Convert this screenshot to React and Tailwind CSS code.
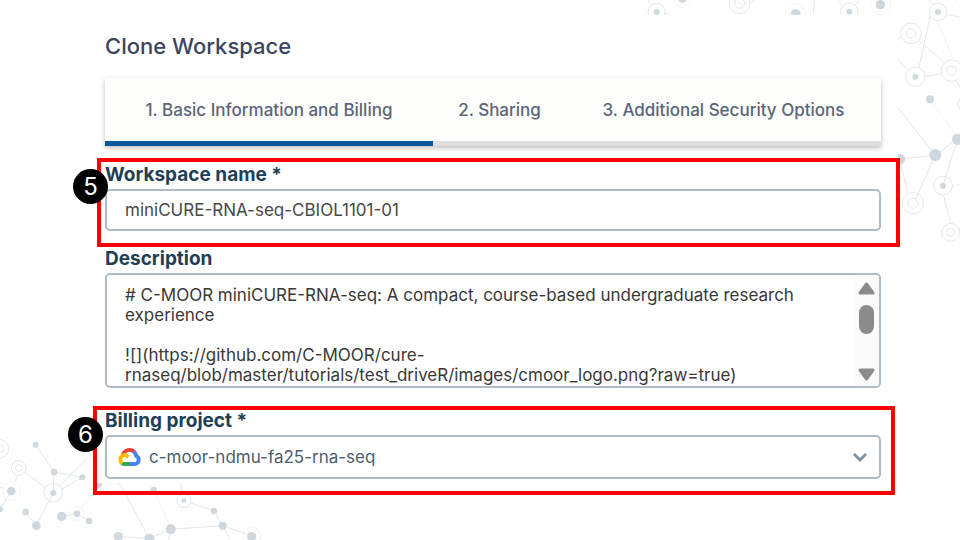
import React from 'react';

const DESCRIPTION = `# C-MOOR miniCURE-RNA-seq: A compact, course-based undergraduate research experience

![](https://github.com/C-MOOR/cure-rnaseq/blob/master/tutorials/test_driveR/images/cmoor_logo.png?raw=true)`;

function NetworkTopRight() {
  return (
    <svg aria-hidden="true" viewBox="0 0 960 750" className="pointer-events-none absolute top-0 right-0 h-[250px] w-80">
      <defs>
        <clipPath id="top-strip">
          <rect x="0" y="0" width="774" height="44" />
        </clipPath>
        <clipPath id="right-strip">
          <rect x="774" y="0" width="186" height="750" />
        </clipPath>
      </defs>
      <g fill="none" stroke="#dbe2e6" strokeWidth="2.5" clipPath="url(#top-strip)">
        <circle cx="50" cy="36" r="26" />
        <path d="M24 0l12 14M72 42h16M330 10l16-12M523 0l-3 44M608 18L592 0M646 16l10-16" />
        <circle cx="127" cy="-3" r="25" strokeDasharray="3 4" />
        <circle cx="299" cy="10" r="31" />
        <circle cx="299" cy="10" r="15" />
        <circle cx="467" cy="42" r="30" strokeDasharray="3 4" />
        <circle cx="628" cy="35" r="26" />
        <circle cx="721" cy="14" r="30" strokeDasharray="3 4" />
        <g fill="#cfd8de" stroke="none">
          <circle cx="50" cy="36" r="9" />
          <circle cx="127" cy="-4" r="12" />
          <circle cx="467" cy="42" r="15" />
          <circle cx="628" cy="35" r="9" />
          <circle cx="721" cy="14" r="14" />
        </g>
      </g>
      <g fill="none" stroke="#dbe2e6" strokeWidth="2.5" clipPath="url(#right-strip)">
        <circle cx="894" cy="36" r="26" />
        <circle cx="813" cy="100" r="31" />
        <circle cx="813" cy="100" r="14" />
        <circle cx="826" cy="230" r="29" />
        <circle cx="935" cy="212" r="32" />
        <circle cx="935" cy="212" r="14" />
        <circle cx="980" cy="312" r="26" />
        <circle cx="970" cy="-6" r="24" strokeDasharray="3 4" />
        <circle cx="909" cy="557" r="28" />
        <circle cx="819" cy="610" r="32" />
        <circle cx="819" cy="610" r="15" />
        <circle cx="932" cy="697" r="27" />
        <circle cx="932" cy="697" r="12" />
        <path d="M868 0l12 14M920 43l40 9M871 48l-34 154M774 117l10-5M836 121l78 67M774 177l30 32M855 230l49-9M949 241l11 22M774 323l112 142l66-47M782 477l104-12l-59 132M782 490l22 93M950 425l-41 132M910 585l22 84" />
        <path d="M892 64l50 118M875 305l75 105M937 557l23-4" strokeDasharray="3 4" />
        <g fill="#cfd8de" stroke="none">
          <circle cx="894" cy="36" r="9" />
          <circle cx="826" cy="230" r="9" />
          <circle cx="870" cy="298" r="12" />
          <circle cx="953" cy="418" r="17" />
          <circle cx="886" cy="465" r="18" />
          <circle cx="780" cy="477" r="16" />
          <circle cx="909" cy="557" r="9" />
        </g>
      </g>
    </svg>
  );
}

function NetworkBottomLeft() {
  return (
    <svg aria-hidden="true" viewBox="0 0 960 420" className="pointer-events-none absolute bottom-0 left-0 h-[140px] w-80">
      <g fill="none" stroke="#dbe2e6" strokeWidth="2.5">
        <circle cx="-2" cy="146" r="28" />
        <circle cx="0" cy="146" r="11" />
        <circle cx="56" cy="204" r="22" />
        <circle cx="56" cy="204" r="10" />
        <circle cx="160" cy="278" r="28" />
        <circle cx="34" cy="273" r="27" strokeDasharray="3 4" />
        <circle cx="231" cy="341" r="20" strokeDasharray="3 4" />
        <circle cx="552" cy="302" r="21" />
        <circle cx="755" cy="410" r="27" strokeDasharray="3 4" />
        <path d="M107 134l55 82l85 16l-64 37M162 216l-2 62l-51 99l-32-41M74 216l63 48M52 226l-6 20M0 262l8 2M34 273L0 328M180 257l96-98M185 349l46-8l36 22M355 410l93 5l64-27l156-11l87 30M358 250l90 165M541 250l6 30M573 309l69 24l26 44l22 43M512 388l-6 32" />
        <path d="M246 324l46-66M328 252h30M461 270l48 106" strokeDasharray="3 4" />
        <g fill="#cfd8de" stroke="none">
          <circle cx="107" cy="134" r="9" />
          <circle cx="162" cy="216" r="10" />
          <circle cx="247" cy="232" r="9" />
          <circle cx="160" cy="279" r="9" />
          <circle cx="34" cy="273" r="13" />
          <circle cx="0" cy="328" r="9" />
          <circle cx="77" cy="336" r="10" />
          <circle cx="109" cy="377" r="13" />
          <circle cx="185" cy="349" r="14" />
          <circle cx="231" cy="341" r="10" />
          <circle cx="267" cy="363" r="10" />
          <path d="M290 250h17q-3 17-17 17z" />
          <circle cx="461" cy="270" r="10" />
          <circle cx="552" cy="301" r="7" />
          <circle cx="642" cy="333" r="10" />
          <circle cx="668" cy="377" r="12" />
          <circle cx="512" cy="388" r="15" />
          <circle cx="448" cy="416" r="15" />
          <circle cx="355" cy="410" r="14" />
          <circle cx="755" cy="410" r="14" />
        </g>
      </g>
    </svg>
  );
}

function CloudLogo() {
  return (
    <svg aria-hidden="true" viewBox="0 0 256 206" className="h-[18px] w-[23px] shrink-0">
      <path fill="#EA4335" d="M170.252 56.819l22.253-22.253 1.483-9.37C153.437-11.677 88.976-7.496 52.42 33.92 42.267 45.423 34.734 59.764 30.717 74.573l7.97-1.123 44.505-7.34 3.436-3.513c19.797-21.742 53.27-24.667 76.128-6.168l7.496.39z" />
      <path fill="#4285F4" d="M224.205 73.918a100.249 100.249 0 0 0-30.217-48.722l-31.232 31.232a55.515 55.515 0 0 1 20.379 44.037v5.544c15.35 0 27.797 12.445 27.797 27.796 0 15.352-12.446 27.485-27.797 27.485h-55.671l-5.466 5.934v33.34l5.466 5.231h55.67c39.93.311 72.553-31.494 72.864-71.424a72.303 72.303 0 0 0-31.793-60.453" />
      <path fill="#34A853" d="M71.87 205.796h55.593V161.29H71.87a27.275 27.275 0 0 1-11.477-2.498l-7.887 2.42-22.408 22.253-1.952 7.574a71.988 71.988 0 0 0 43.724 14.757" />
      <path fill="#FBBC05" d="M71.87 61.426C31.94 61.663-.237 94.228.001 134.158a72.301 72.301 0 0 0 28.145 56.88l32.247-32.246c-13.99-6.322-20.208-22.786-13.887-36.776 6.32-13.99 22.786-20.208 36.775-13.888a27.796 27.796 0 0 1 13.887 13.888l32.248-32.248A72.224 72.224 0 0 0 71.87 61.426" />
    </svg>
  );
}

function Scrollbar() {
  return (
    <div aria-hidden="true" className="flex w-[26px] shrink-0 flex-col items-center bg-[#fbfbfb] pt-[7px] pb-[5px]">
      <svg viewBox="0 0 17 13" className="h-[13px] w-[17px]">
        <path d="M8.5 2L15 11H2z" fill="#8b8b8b" stroke="#8b8b8b" strokeWidth="3" strokeLinejoin="round" />
      </svg>
      <div className="mt-[10px] h-[29px] w-[15px] rounded-full bg-[#8b8b8b]" />
      <svg viewBox="0 0 17 13" className="mt-auto h-[13px] w-[17px]">
        <path d="M8.5 11L15 2H2z" fill="#8b8b8b" stroke="#8b8b8b" strokeWidth="3" strokeLinejoin="round" />
      </svg>
    </div>
  );
}

export default function App() {
  return (
    <div className="relative min-h-screen overflow-hidden bg-white font-['Inter',sans-serif]">
      <NetworkTopRight />
      <NetworkBottomLeft />
      <main className="relative pt-8 pr-[79px] pl-[105px]">
        <h1 className="text-[22px] leading-7 font-medium text-[#3b4560]">Clone Workspace</h1>

        <nav className="mt-[18px] grid grid-cols-[328fr_133fr_315fr] bg-[#fdfdfb] text-[17px] font-medium whitespace-nowrap text-[#5b6578] shadow-[0_2px_5px_rgba(0,0,0,0.25)]">
          <button type="button" className="h-[68px] border-b-5 border-[#065a9b] pt-[2px]">1. Basic Information and Billing</button>
          <button type="button" className="h-[68px] border-b-5 border-[#dfdfdf] pt-[2px]">2. Sharing</button>
          <button type="button" className="h-[68px] border-b-5 border-[#dfdfdf] pt-[2px]">3. Additional Security Options</button>
        </nav>

        <section className="relative mt-4">
          <label htmlFor="workspace-name" className="block text-[19px] leading-[26px] font-bold text-[#1f3f57]">Workspace name *</label>
          <input
            id="workspace-name"
            type="text"
            defaultValue="miniCURE-RNA-seq-CBIOL1101-01"
            className="mt-px block h-[42px] w-full rounded-[5px] border-2 border-[#afbcc6] bg-white px-[18px] text-[17px] text-[#484848]"
          />
          <div className="pointer-events-none absolute -top-1 -right-[19px] -bottom-4 -left-2 border-4 border-[#fe0000]" />
          <span className="absolute top-[7px] -left-8 flex size-[35px] items-center justify-center rounded-full bg-black text-2xl text-white">5</span>
        </section>

        <section className="mt-[15px]">
          <label htmlFor="description" className="block text-[19px] leading-[26px] font-bold text-[#1f3f57]">Description</label>
          <div className="mt-px flex h-[115px] overflow-hidden rounded-[5px] border-2 border-[#afbcc6] bg-white">
            <textarea
              id="description"
              defaultValue={DESCRIPTION}
              className="min-w-0 flex-1 resize-none overflow-hidden pt-[10px] pr-2 pl-[18px] text-[17px] leading-5 text-[#383838]"
            />
            <Scrollbar />
          </div>
        </section>

        <section className="relative mt-5">
          <label htmlFor="billing-project" className="block text-[19px] leading-[26px] font-bold text-[#1f3f57]">Billing project *</label>
          <div className="mt-px flex h-11 items-center rounded-[5px] border-2 border-[#afbcc6] bg-white px-[11px]">
            <CloudLogo />
            <select id="billing-project" className="min-w-0 flex-1 appearance-none bg-transparent pt-[2px] pl-2 text-[17px] text-[#4d5d6b]">
              <option>c-moor-ndmu-fa25-rna-seq</option>
            </select>
            <svg aria-hidden="true" viewBox="0 0 16 10" className="h-[10px] w-4 shrink-0">
              <path d="M2 2l6 6 6-6" fill="none" stroke="#7b909e" strokeWidth="2.8" />
            </svg>
          </div>
          <div className="pointer-events-none absolute -top-[2px] -right-[14px] -bottom-4 -left-3 border-4 border-[#fe0000]" />
          <span className="absolute top-[9px] -left-[37px] flex size-[35px] items-center justify-center rounded-full bg-black text-2xl text-white">6</span>
        </section>
      </main>
    </div>
  );
}
